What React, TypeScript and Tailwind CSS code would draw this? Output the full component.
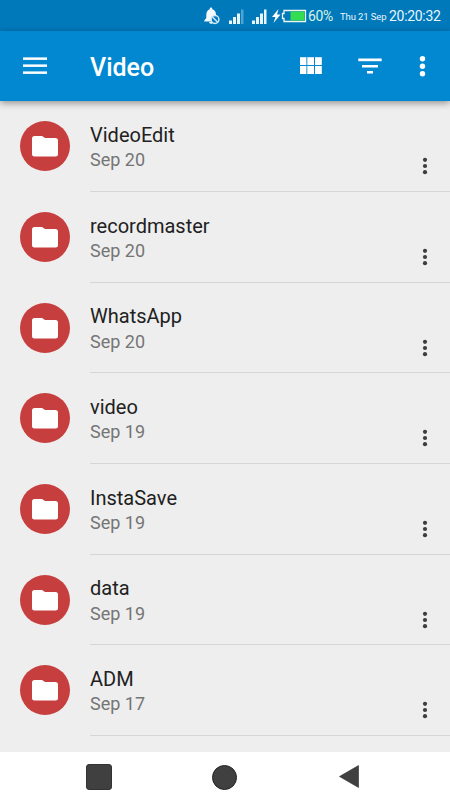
const folders = [
  { name: 'VideoEdit', date: 'Sep 20' },
  { name: 'recordmaster', date: 'Sep 20' },
  { name: 'WhatsApp', date: 'Sep 20' },
  { name: 'video', date: 'Sep 19' },
  { name: 'InstaSave', date: 'Sep 19' },
  { name: 'data', date: 'Sep 19' },
  { name: 'ADM', date: 'Sep 17' },
]

function Signal({ weak }: { weak?: boolean }) {
  return (
    <svg className="w-[15px] h-4 shrink-0" viewBox="0 0 15 16" fill="#e9f5fc">
      <rect x="0" y="12.500" width="3" height="3.500" />
      <rect x="4" y="9" width="3" height="7" />
      <rect x="8" y="5.500" width="3" height="10.500" />
      <rect x="12" y="1.500" width="2.500" height="14.500" opacity={weak ? 0.35 : 1} />
    </svg>
  )
}

function StatusBar() {
  return (
    <div className="h-[31px] shrink-0 bg-[#0079bb] flex items-center pl-[204px] text-[#e9f5fc] whitespace-nowrap">
      <svg className="w-4 h-[18px] shrink-0" viewBox="0 0 16 18">
        <path d="M7 0.500a1.300 1.300 0 0 1 1.300 1.300v.5C10.800 2.900 12 5 12 7.500V11l2 2.500v1H.3v-1L2.300 11V7.500c0-2.500 1.300-4.500 3.400-5.200v-.5A1.300 1.300 0 0 1 7 .5z" fill="#f3fafe" />
        <path d="M5 15h3.500v1.800H7A2 2 0 0 1 5 15z" fill="#f3fafe" />
        <circle cx="11" cy="12.500" r="3.900" fill="#0079bb" stroke="#d5ebf8" strokeWidth="1.500" />
        <path d="M8.500 10l5 5" stroke="#d5ebf8" strokeWidth="1.500" />
      </svg>
      <div className="ml-[9px] flex gap-2">
        <Signal weak />
        <Signal />
      </div>
      <svg className="ml-[5px] w-[35px] h-4 shrink-0" viewBox="0 0 35 16">
        <path d="M6.500 1L0 9h3.500L1.500 15 8.500 6.500H5L6.500 1z" fill="#fff" />
        <path d="M12 2.500h21.500v11H12v-3h-1.500v-5H12z" fill="#0079bb" stroke="#f0f6ee" strokeWidth="1.300" />
        <rect x="18.500" y="3.500" width="14" height="9" fill="#34dd50" />
      </svg>
      <span className="w-8 shrink-0 text-[14px] leading-4 text-[#d9f3e2] tracking-[-0.4px] pl-px pt-px">60%</span>
      <span className="w-[50px] shrink-0 text-[9.500px] leading-4 pt-[3px] pl-px tracking-[-0.1px]">Thu 21 Sep</span>
      <span className="text-[14px] leading-4 pt-px tracking-[-0.3px]">20:20:32</span>
    </div>
  )
}

function AppBar() {
  return (
    <header className="relative z-10 h-[70px] shrink-0 bg-[#0288d1] flex items-center text-white shadow-[0_2px_7px_rgba(0,0,0,0.4)]">
      <svg className="ml-[23px] w-6 h-[18px]" viewBox="0 0 24 18" fill="currentColor">
        <rect width="24" height="2.500" y="0.400" />
        <rect width="24" height="2.500" y="7.400" />
        <rect width="24" height="2.500" y="14.400" />
      </svg>
      <h1 className="ml-[43px] w-[210px] text-[25px] leading-8 font-medium pt-[3px]">Video</h1>
      <svg className="w-[22px] h-[18px]" viewBox="0 0 22 18" fill="currentColor">
        <rect x="0" y="0.200" width="6.400" height="7.800" />
        <rect x="7.300" y="0.200" width="6.700" height="7.800" />
        <rect x="15" y="0.200" width="6.800" height="7.800" />
        <rect x="0" y="9" width="6.400" height="8" />
        <rect x="7.300" y="9" width="6.700" height="8" />
        <rect x="15" y="9" width="6.800" height="8" />
      </svg>
      <svg className="ml-9 w-6 h-[18px]" viewBox="0 0 24 18" fill="currentColor">
        <rect x="0.300" y="1.500" width="23.400" height="2.700" />
        <rect x="4" y="8" width="16" height="2.500" />
        <rect x="9" y="14" width="6" height="2.500" />
      </svg>
      <svg className="ml-[37px] w-[7px] h-[22px]" viewBox="0 0 7 22" fill="currentColor">
        <circle cx="3.500" cy="3.800" r="2.700" />
        <circle cx="3.500" cy="11.200" r="2.700" />
        <circle cx="3.500" cy="18.700" r="2.700" />
      </svg>
    </header>
  )
}

function FolderRow({ name, date }: { name: string; date: string }) {
  return (
    <li className="h-[90.670px] shrink-0 flex pl-5">
      <div className="mt-5 mr-5 size-[50px] shrink-0 rounded-full bg-[#c73e3e] flex items-center justify-center">
        <svg className="w-[26px] h-[22px]" viewBox="0 0 26 22" fill="#fff">
          <path d="M2.500 1H9.600Q10.500 1 11.200 1.700L13 3H23.500A2.500 2.500 0 0 1 26 5.500V19A2.500 2.500 0 0 1 23.500 21.500H2.500A2.500 2.500 0 0 1 0 19V3.500A2.500 2.500 0 0 1 2.500 1z" />
        </svg>
      </div>
      <div className="flex-1 flex justify-between border-b border-[#d6d6d6]">
        <div className="pt-[20.600px]">
          <p className="text-[20px] leading-[26px] mb-[0.400px] text-[#212121]">{name}</p>
          <p className="text-[18px] leading-6 text-[#757575]">{date}</p>
        </div>
        <svg className="mt-[56px] mr-[22px] w-[6px] h-[18px]" viewBox="0 0 6 18" fill="#3d3d3d">
          <circle cx="3" cy="2.800" r="2.100" />
          <circle cx="3" cy="9" r="2.100" />
          <circle cx="3" cy="15.200" r="2.100" />
        </svg>
      </div>
    </li>
  )
}

export default function App() {
  return (
    <div className="w-[450px] h-[800px] flex flex-col overflow-hidden bg-[#eeeeee] font-[Roboto,sans-serif]">
      <StatusBar />
      <AppBar />
      <ul className="flex-1 min-h-0 overflow-hidden flex flex-col pt-[0.300px]">
        {folders.map((f) => (
          <FolderRow key={f.name} name={f.name} date={f.date} />
        ))}
      </ul>
      {/* System navigation */}
      <nav className="h-12 shrink-0 bg-white flex items-center pl-[86px]">
        <div className="size-[26px] mt-[2px] rounded-[3px] bg-[#404040] border border-[#333]" />
        <div className="ml-[100px] size-[25px] mt-[2px] rounded-full bg-[#404040] border border-[#222]" />
        <svg className="ml-[102px] mt-[1px] w-5 h-[23px]" viewBox="0 0 20 23">
          <path d="M.500 11.500L19.500.500v22z" fill="#404040" stroke="#2b2b2b" strokeWidth="0.600" />
        </svg>
      </nav>
    </div>
  )
}
